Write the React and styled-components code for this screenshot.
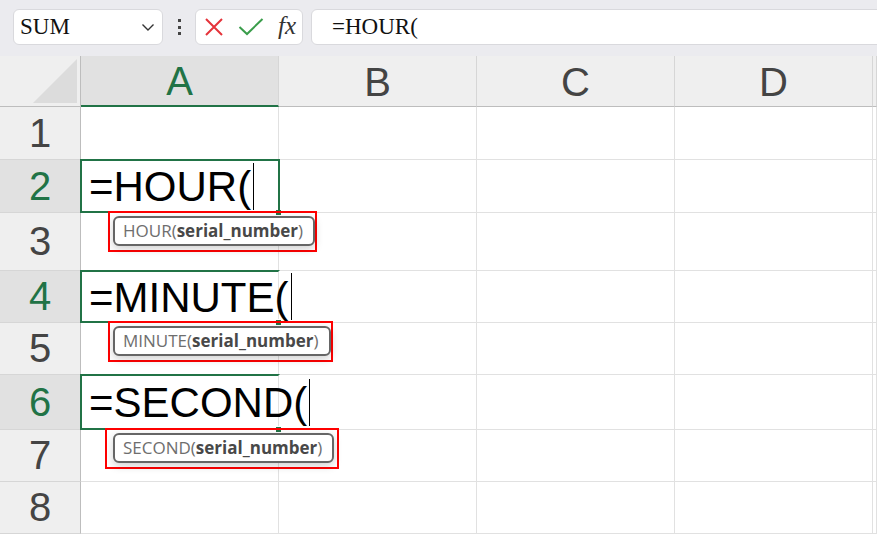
import React from "react";
import styled, { createGlobalStyle } from "styled-components";

const GlobalStyle = createGlobalStyle`
  html, body {
    margin: 0;
    padding: 0;
    background: #fff;
    overflow: hidden;
  }
  body {
    font-family: "Liberation Sans", Arial, sans-serif;
  }
`;

const Page = styled.div`
  width: 877px;
  height: 535px;
  overflow: hidden;
  display: flex;
  flex-direction: column;
`;

const Toolbar = styled.div`
  height: 56px;
  flex: none;
  box-sizing: border-box;
  background: #ebebef;
  display: flex;
  align-items: center;
  padding: 0 0 2px 13px;
  overflow: hidden;
`;

const Box = styled.div`
  height: 36px;
  box-sizing: border-box;
  background: #fff;
  border: 1px solid #d9d9dd;
  border-radius: 6px;
  display: flex;
  align-items: center;
`;

const NameBox = styled(Box)`
  width: 150px;
  padding: 0 6px 0 6px;
  justify-content: space-between;
`;

const SerifText = styled.span`
  font-family: "Liberation Serif", "Times New Roman", serif;
  font-size: 23px;
  color: #111;
`;

const Dots = styled.div`
  width: 32px;
  display: flex;
  flex-direction: column;
  align-items: center;
  gap: 3.5px;
  span {
    width: 3px;
    height: 3px;
    background: #444;
  }
`;

const FxBox = styled(Box)`
  width: 108px;
  padding: 0 6px 0 8px;
  justify-content: space-between;
`;

const FxLabel = styled.span`
  font-family: "Liberation Serif", "Times New Roman", serif;
  font-style: italic;
  font-size: 25px;
  color: #333;
  margin-top: -3px;
`;

const FormulaBar = styled(Box)`
  flex: 1;
  margin-left: 8px;
  margin-right: -10px;
  padding-left: 20px;
`;

const Sheet = styled.div`
  display: grid;
  grid-template-columns: 81px repeat(4, 198px) 1fr;
  grid-template-rows: 51px ${(p) => p.rows.map((r) => `${r}px`).join(" ")};
`;

const Corner = styled.div`
  background: #efefef;
  border-right: 1px solid #bdbdbd;
  border-bottom: 1px solid #bdbdbd;
  box-sizing: border-box;
  display: flex;
  align-items: flex-end;
  justify-content: flex-end;
  padding: 0 3px 3px 0;
`;

const ColHead = styled.div`
  background: ${(p) => (p.active ? "#e1e1e1" : "#efefef")};
  border-right: 1px solid #d6d6d6;
  border-bottom: ${(p) => (p.active ? "2px solid #217346" : "1px solid #bdbdbd")};
  box-sizing: border-box;
  display: flex;
  align-items: center;
  justify-content: center;
  font-size: 40px;
  color: ${(p) => (p.active ? "#217346" : "#444")};
  padding-top: 2px;
`;

const RowHead = styled.div`
  background: ${(p) => (p.active ? "#e1e1e1" : "#efefef")};
  border-right: 1px solid #bdbdbd;
  border-bottom: 1px solid #d6d6d6;
  box-sizing: border-box;
  display: flex;
  align-items: center;
  justify-content: center;
  font-size: 40px;
  color: ${(p) => (p.active ? "#217346" : "#444")};
`;

const Cell = styled.div`
  position: relative;
  border-right: 1px solid #e1e1e1;
  border-bottom: 1px solid #e1e1e1;
  box-sizing: border-box;
  background: #fff;
  z-index: ${(p) => (p.active ? 2 : 1)};
`;

const ActiveCell = styled(Cell)`
  display: flex;
  align-items: center;
  padding: 2px 0 0 8px;
  white-space: nowrap;
  font-size: 42px;
  color: #000;
  &::after {
    content: "";
    position: absolute;
    left: -1px;
    top: -1px;
    right: -2px;
    bottom: -1px;
    border: 2px solid #217346;
    border-right-color: ${(p) => (p.spill ? "transparent" : "#217346")};
    pointer-events: none;
  }
`;

const Handle = styled.span`
  position: absolute;
  right: -4px;
  bottom: -4px;
  width: 5px;
  height: 5px;
  background: #217346;
  border: 1px solid #fff;
`;

const Caret = styled.span`
  flex: none;
  display: inline-block;
  width: 1px;
  height: 47px;
  background: #000;
  margin-left: 2px;
  margin-top: -2px;
`;

const Highlight = styled.div`
  position: absolute;
  top: calc(100% - 1px);
  left: ${(p) => p.left}px;
  border: 2px solid #f00;
  padding: 3px ${(p) => p.padRight}px 4px ${(p) => 30 - p.left}px;
  z-index: 3;
`;

const Tip = styled.div`
  border: 2px solid #666;
  border-radius: 6px;
  background: #fff;
  box-shadow: 0 3px 8px rgba(0, 0, 0, 0.18);
  padding: 2px 10px 3px 8px;
  font-family: "Open Sans", "Noto Sans", sans-serif;
  font-size: 17px;
  line-height: 21px;
  color: #6e6e6e;
  white-space: nowrap;
  b {
    color: #484848;
    font-weight: 700;
  }
`;

const Chevron = () => (
  <svg width="16" height="16" viewBox="0 0 16 16">
    <path d="M2.5 5.5 L8 11 L13.5 5.5" fill="none" stroke="#333" strokeWidth="1.4" />
  </svg>
);

const Cancel = () => (
  <svg width="20" height="20" viewBox="0 0 20 20">
    <path d="M2 2 L18 18 M18 2 L2 18" stroke="#e5333a" strokeWidth="2" />
  </svg>
);

const Enter = () => (
  <svg width="26" height="20" viewBox="0 0 26 20">
    <path d="M1.5 10 L9 17 L24.5 2" fill="none" stroke="#3a9d4b" strokeWidth="2" />
  </svg>
);

const SelectAll = () => (
  <svg width="44" height="44" viewBox="0 0 44 44">
    <path d="M44 0 L44 44 L0 44 Z" fill="#dcdcdc" />
  </svg>
);

const rowHeights = [53, 53, 58, 52, 52, 55, 52, 52];

const formulas = {
  2: { text: "=HOUR(", fn: "HOUR", left: 27, padRight: 0, spill: false },
  4: { text: "=MINUTE(", fn: "MINUTE", left: 27, padRight: 0, spill: true },
  6: { text: "=SECOND(", fn: "SECOND", left: 24, padRight: 3, spill: true },
};

const columns = ["A", "B", "C", "D", ""];

const App = () => {
  return (
    <Page>
      <GlobalStyle />
      <Toolbar>
        <NameBox>
          <SerifText>SUM</SerifText>
          <Chevron />
        </NameBox>
        <Dots>
          <span />
          <span />
          <span />
        </Dots>
        <FxBox>
          <Cancel />
          <Enter />
          <FxLabel>fx</FxLabel>
        </FxBox>
        <FormulaBar>
          <SerifText>=HOUR(</SerifText>
        </FormulaBar>
      </Toolbar>
      <Sheet rows={rowHeights}>
        <Corner>
          <SelectAll />
        </Corner>
        {columns.map((c, i) => (
          <ColHead key={i} active={c === "A"}>{c}</ColHead>
        ))}
        {rowHeights.map((h, idx) => {
          const n = idx + 1;
          const f = formulas[n];
          return (
            <React.Fragment key={n}>
              <RowHead active={!!f}>{n}</RowHead>
              {f ? (
                <ActiveCell active spill={f.spill}>
                  {f.text}
                  <Caret />
                  <Handle />
                  <Highlight left={f.left} padRight={f.padRight}>
                    <Tip>
                      {f.fn}(<b>serial_number</b>)
                    </Tip>
                  </Highlight>
                </ActiveCell>
              ) : (
                <Cell />
              )}
              <Cell />
              <Cell />
              <Cell />
              <Cell />
            </React.Fragment>
          );
        })}
      </Sheet>
    </Page>
  );
};

export default App;
